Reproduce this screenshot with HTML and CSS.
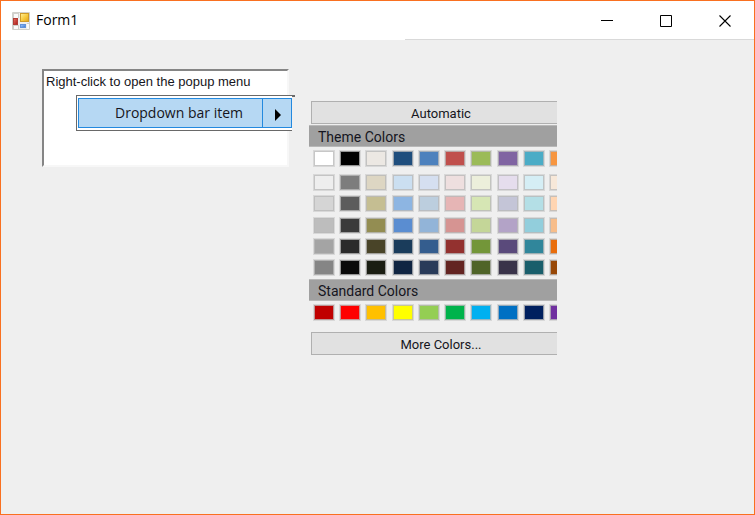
FILE: index.html
```html
<!DOCTYPE html>
<html lang="en">
<head>
<meta charset="utf-8">
<title>Form1</title>
<link rel="stylesheet" href="styles.css">
</head>
<body>
<div class="window">
  <header class="titlebar">
    <svg class="app-icon" width="18" height="18" viewBox="0 0 18 18" aria-hidden="true">
      <defs>
        <linearGradient id="gold" x2="1" y2="1"><stop stop-color="#fff0a0"/><stop offset=".5" stop-color="#f8cd42"/><stop offset="1" stop-color="#e2a21c"/></linearGradient>
        <linearGradient id="blue" x2="1" y2="1"><stop stop-color="#a6ccff"/><stop offset="1" stop-color="#3373d4"/></linearGradient>
        <linearGradient id="red" x2="1" y2="1"><stop stop-color="#e77464"/><stop offset="1" stop-color="#a91615"/></linearGradient>
      </defs>
      <rect width="18" height="18" rx="1" fill="#d0d0cc"/>
      <path d="M2 2h4v4H2zM2 14h4v3H2zM15 12h2v5h-2z" fill="#fafafa"/>
      <rect x="7" y="1" width="10" height="10" fill="#eee"/>
      <rect x="8.500" y="1.500" width="8" height="8" fill="url(#gold)" stroke="#cf9b29"/>
      <rect x="1" y="6" width="6" height="7" fill="#eee"/>
      <rect x="1.500" y="6.500" width="4" height="6" fill="url(#red)" stroke="#b13c36"/>
      <rect x="7" y="11" width="8" height="6" fill="#eee"/>
      <rect x="8.500" y="12.500" width="5" height="3" fill="url(#blue)" stroke="#6393d9"/>
    </svg>
    <h1 class="title">Form1</h1>
    <div class="controls">
      <button type="button" aria-label="Minimize"><svg width="12" height="12" viewBox="0 0 12 12"><path d="M0 5.500h12" stroke="#000"/></svg></button>
      <button type="button" aria-label="Maximize"><svg width="12" height="12" viewBox="0 0 12 12"><path d="M.5.5h11v11H.5z" fill="none" stroke="#000"/></svg></button>
      <button type="button" aria-label="Close"><svg width="12" height="12" viewBox="0 0 12 12"><path d="M.5.5l11 11M11.500.5l-11 11" stroke="#000" stroke-width="1.100"/></svg></button>
    </div>
  </header>
  <main class="form">
    <div class="editor">
      <textarea class="memo" aria-label="Popup menu area">Right-click to open the popup menu</textarea>
      <div class="menu">
        <button type="button" class="menu-item">Dropdown bar item</button>
        <button type="button" class="menu-arrow" aria-label="Open colors"><svg width="6" height="12" viewBox="0 0 6 12"><path d="M0 0l6 6-6 6z"/></svg></button>
      </div>
    </div>
    <section class="picker">
      <div class="picker-body">
        <button type="button" class="wide">Automatic</button>
        <h2 class="heading">Theme Colors</h2>
        <div class="palette" id="theme"></div>
        <div class="palette" id="shades"></div>
        <h2 class="heading">Standard Colors</h2>
        <div class="palette" id="standard"></div>
        <button type="button" class="wide">More Colors...</button>
      </div>
    </section>
  </main>
</div>
<script src="palette.js"></script>
</body>
</html>
```
FILE: styles.css
```css
* { box-sizing: border-box; }
body { margin: 0; background: #efefef; color: #151520; font-family: Roboto, "Liberation Sans", sans-serif; font-size: 14px; line-height: 18px; }
button { margin: 0; padding: 0; border: 0; border-radius: 0; background: none; color: inherit; font: inherit; }
svg { display: block; }
h1, h2 { margin: 0; font-weight: 400; }
.window { display: flex; flex-direction: column; min-height: 100vh; border: 1px solid #f97020; }
.titlebar { display: flex; align-items: center; height: 39px; padding-left: 11px; background: linear-gradient(#d9d9d9, #d9d9d9) right bottom / calc(100% - 404px) 1px no-repeat, #fff; }
.title { padding-bottom: 2px; margin-left: 6px; color: #000; font: 14px/20px "Open Sans", sans-serif; }
.controls { display: flex; height: 100%; margin-left: auto; }
.controls button { display: grid; place-items: center; width: 59px; }
.form { display: grid; grid-template-columns: 247px 248px; gap: 20px; align-items: start; padding: 29px 41px; }
.editor { position: relative; }
.memo { display: block; width: 100%; height: 98px; padding: 2px; border: 2px solid; border-color: #858585 #f7f7f7 #f7f7f7 #858585; border-radius: 0; outline: 0; background: #fff; color: inherit; font: 13px/18px "Liberation Sans", Arial, sans-serif; resize: none; overflow: hidden; }
.menu { position: absolute; top: 26px; left: 34px; display: flex; width: 216px; height: 36px; padding: 2px 0 2px 1px; border: 1px solid #696969; border-right: 0; background: #fff; }
.menu::after { content: ""; position: absolute; top: -1px; right: -3px; width: 3px; height: 2px; background: #696969; }
.menu-item, .menu-arrow { border: 1px solid #2389df; background: #b6d8f3; }
.menu-item { flex: 1; padding: 0 0 0 17px; border-right: 0; font: 14px/20px "Open Sans", sans-serif; }
.menu-arrow { display: grid; place-items: center; width: 30px; padding: 4px 0 0 2px; }
.picker { margin-top: 32px; overflow: hidden; }
.picker-body { display: flex; flex-direction: column; width: 264px; }
.wide { height: 23px; margin: 0 2px 1px; padding-top: 2px; border: 1px solid #b0b0b0; background: #e1e1e1; font-size: 13px; }
.heading { height: 22px; padding-left: 9px; border-top: 1px solid #b8b8b8; border-bottom: 1px solid #b8b8b8; background: #a0a0a0; font-size: 14px; line-height: 22px; }
.palette { display: grid; grid-template-columns: repeat(10, 22px); justify-content: space-between; align-content: space-between; margin: 3px 2px 0 4px; }
#shades { height: 102px; margin-top: 7px; margin-bottom: 3px; }
#standard { margin-bottom: 11px; }
.swatch { height: 17px; border: 1px solid #d8d8d8; box-shadow: inset 0 0 0 1px rgb(185 185 185 / 80%); }
```
FILE: palette.js
```js
const palettes = {
  theme: ["#ffffff #000000 #ece8e3 #1f4e7d #4d81bd #c0504d #9bbb58 #8064a2 #4bacc6 #f79640"],
  shades: [
    "#eeeeee #7d7d7d #ddd6c3 #cbdff1 #d5dff0 #eedfdf #ecefdb #e5dded #d5eef5 #f7e8d9",
    "#d5d5d5 #5c5c5c #c5be92 #8db5e2 #bccede #e6b5b5 #d6e6b4 #c4c5d7 #b4dfe6 #ffd5b2",
    "#bdbdbd #3b3b3b #938d52 #5a8dd1 #92b4d8 #d69492 #c4d698 #b3a3c7 #92cedc #f7bd8a",
    "#a4a4a4 #2b2b2b #494428 #1a3c5b #345d8e #93312f #739639 #5a4a7b #30869b #e96d0b",
    "#858585 #090909 #1a1d12 #102542 #293b59 #632421 #4f6428 #393349 #195e6b #984807"
  ],
  standard: ["#c00000 #ff0000 #ffc000 #ffff00 #94ce53 #00b34b #00b0f0 #0070c3 #00205f #7030a0"]
};

for (const [id, rows] of Object.entries(palettes)) {
  const palette = document.getElementById(id);
  for (const color of rows.join(" ").split(" ")) {
    const swatch = document.createElement("button");
    swatch.type = "button";
    swatch.className = "swatch";
    swatch.style.backgroundColor = color;
    swatch.setAttribute("aria-label", color);
    palette.append(swatch);
  }
}
```
